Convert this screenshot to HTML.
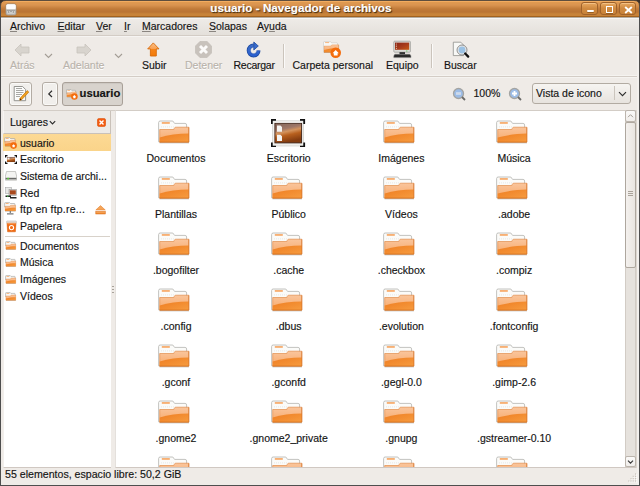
<!DOCTYPE html>
<html><head><meta charset="utf-8">
<style>
*{margin:0;padding:0;box-sizing:border-box}
html,body{width:640px;height:486px;overflow:hidden;background:#EFEBE7}
body{position:relative;font-family:"Liberation Sans",sans-serif;font-size:10.5px;color:#141414}
.t{-webkit-text-stroke:0.15px currentColor}
.a{position:absolute}
.t{position:absolute;white-space:nowrap;line-height:12px;font-size:10.5px}
.dis{color:#b9b3ab;text-shadow:0 1px 0 #fff}
.u{text-decoration:underline;text-decoration-thickness:1px;text-underline-offset:1px;text-decoration-color:#8a8580}
</style></head><body>
<svg width="0" height="0" style="position:absolute">
<defs>
<linearGradient id="fg" x1="0" y1="0" x2="0" y2="1">
<stop offset="0" stop-color="#FAC59C"/><stop offset="1" stop-color="#F7A96A"/>
</linearGradient>
<linearGradient id="fg2" x1="0" y1="0" x2="1" y2="1">
<stop offset="0" stop-color="#EF7E22"/><stop offset="1" stop-color="#F69C40"/>
</linearGradient>
<symbol id="folder" viewBox="0 0 36 28">
<path d="M2.6,4.6 Q2.6,3 4.2,3 L16.8,3 L18.6,5.4 L29,5.4 Q30.6,5.4 30.6,7 L30.6,13 L4,23.8 L2.6,23.8 Z" fill="#fbfbf9" stroke="#b4b4b0" stroke-width="0.8"/>
<rect x="5.8" y="4.1" width="8" height="1.7" fill="#F7A866"/>
<path d="M5,8.9 L19,8.9" stroke="#dcdcd8" stroke-width="0.6" stroke-dasharray="1 1"/>
<path d="M3.7,11.5 L17.8,11.5 C18.3,9.6 19,9.2 20.2,9.2 L32.8,9.2 L32.8,24.2 L3.7,24.2 Z" fill="url(#fg)" stroke="#de8038" stroke-width="0.6"/>
<path d="M3.7,19.6 C12,17 22,15.8 32.8,15.6 L32.8,24.2 L3.7,24.2 Z" fill="url(#fg2)"/>
<path d="M3.7,24 L32.8,24 L32.8,9.4" fill="none" stroke="#d06818" stroke-width="0.7" opacity="0.8"/>
<rect x="3.5" y="24.4" width="29.5" height="1.2" fill="#000" opacity="0.14"/>
</symbol>
<linearGradient id="dg" x1="0" y1="0" x2="0.3" y2="1">
<stop offset="0" stop-color="#7e6258"/><stop offset="0.35" stop-color="#a07868"/><stop offset="0.5" stop-color="#d4945e"/><stop offset="0.68" stop-color="#b8601e"/><stop offset="1" stop-color="#843c10"/>
</linearGradient>
<symbol id="desk" viewBox="0 0 35 28">
<rect x="1.3" y="1.8" width="31.4" height="25.2" fill="#f0f0ee" stroke="#c8c8c4" stroke-width="0.6"/>
<rect x="3.9" y="4.4" width="26.7" height="19.5" fill="url(#dg)" stroke="#3e2418" stroke-width="0.9"/>
<path d="M4.5,5 L30,5" stroke="#a08070" stroke-width="0.6" opacity="0.6"/>
<path d="M6,6.4 L9.5,6.4 L11,7.9 L11,12.8 L6,12.8 Z M6,15.7 L9.5,15.7 L11,17.2 L11,22 L6,22 Z" fill="#f4f4f2"/>
<path d="M0.8,5 L0.8,0.8 L5,0.8 M29,0.8 L33.2,0.8 L33.2,5 M0.8,23.6 L0.8,27.6 L5,27.6 M29,27.6 L33.2,27.6 L33.2,23.6" fill="none" stroke="#111" stroke-width="1.8"/>
</symbol>
<symbol id="mfolder" viewBox="0 0 12.5 10">
<path d="M0.6,1.3 Q0.6,0.6 1.3,0.6 L5.6,0.6 L6.4,1.5 L10.3,1.5 Q10.9,1.5 10.9,2.1 L10.9,5 L0.6,5 Z" fill="#f7f7f5" stroke="#9c9c98" stroke-width="0.6"/>
<rect x="1.6" y="1.2" width="3" height="0.8" fill="#f7a866"/>
<path d="M1,4.3 L5.9,4.3 Q6.3,3.3 7,3.3 L11.6,3.3 L11.6,8.9 L1,8.9 Z" fill="url(#fg)" stroke="#d98440" stroke-width="0.4"/>
<path d="M1,7.1 C4,6.1 8,5.7 11.6,5.7 L11.6,8.9 L1,8.9 Z" fill="url(#fg2)"/>
<rect x="1" y="8.9" width="10.6" height="0.8" fill="#000" opacity="0.15"/>
</symbol>
</defs>
</svg>

<!-- window frame -->
<div class="a" style="left:0;top:0;width:640px;height:486px;border:1px solid #4a3e33;border-top:none"></div>

<!-- title bar -->
<div class="a" style="left:0;top:0;width:640px;height:17px;background:linear-gradient(#5e4e3e 0,#5e4e3e 1px,#F2AC60 1px,#F2AC60 2px,#E09A50 2px,#DA9450 5px,#C07A38 9px,#BA7434 12px,#C8843A 14px,#C88238 16px,#A2621E 16px,#A2621E 17px);border-radius:4px 4px 0 0"></div>
<svg class="a" style="left:5px;top:3px" width="12" height="13" viewBox="0 0 12 13"><rect x="0.8" y="0.8" width="10.4" height="11.4" rx="2" fill="#e9e9e7" stroke="#9a7a5a" stroke-width="0.8" opacity="0.95"/><rect x="1.3" y="1.3" width="9.4" height="5" rx="1.5" fill="#fdfdfc"/><rect x="1.3" y="6.5" width="9.4" height="5.2" fill="#a5a5a3"/><path d="M2.5,8 L2.5,10.5 L9.5,10.5 L9.5,8 M4.5,8 L4.5,9.5 L7.5,9.5 L7.5,8" fill="none" stroke="#d8d8d6" stroke-width="0.8"/></svg>
<div class="t" style="left:210.3px;top:1.2px;font-weight:bold;font-size:11.7px;line-height:14px;color:#fff;text-shadow:1px 1px 1px #3a2a10">usuario - Navegador de archivos</div>
<!-- window buttons -->
<div class="a" style="left:581px;top:2px;width:17px;height:13px;border:1px solid #a0622a;border-radius:3px;background:linear-gradient(#e8a860,#d08a40 50%,#c88238);box-shadow:inset 0 1px 0 rgba(255,220,170,.5)"><div class="a" style="left:4.5px;top:6.5px;width:7px;height:2.6px;background:#fff;border-radius:1px;box-shadow:0 1px 0 rgba(80,40,0,.4)"></div></div>
<div class="a" style="left:600px;top:2px;width:17px;height:13px;border:1px solid #a0622a;border-radius:3px;background:linear-gradient(#e8a860,#d08a40 50%,#c88238);box-shadow:inset 0 1px 0 rgba(255,220,170,.5)"><div class="a" style="left:4.5px;top:2.5px;width:7px;height:7px;border:1.6px solid #fff;box-shadow:0 1px 0 rgba(80,40,0,.4)"></div></div>
<div class="a" style="left:619px;top:2px;width:17px;height:13px;border:1px solid #a0622a;border-radius:3px;background:linear-gradient(#e8a860,#d08a40 50%,#c88238);box-shadow:inset 0 1px 0 rgba(255,220,170,.5)"><svg class="a" style="left:4px;top:2.5px" width="9" height="8"><path d="M1.2,1 L7.8,7 M7.8,1 L1.2,7" stroke="#fff" stroke-width="1.9"/></svg></div>
<div class="a" style="left:639px;top:4px;width:1px;height:482px;background:#4e4e4e"></div>
<div class="a" style="left:0;top:4px;width:1px;height:482px;background:#4e4e4e"></div>
<svg class="a" style="left:0;top:0" width="6" height="6"><path d="M0,0 L6,0 L6,0.5 Q0.5,0.5 0.5,6 L0,6 Z" fill="#3a3028"/><path d="M0.5,6 Q0.5,0.5 6,0.5" fill="none" stroke="#5a4a3a" stroke-width="1"/></svg>
<svg class="a" style="left:634px;top:0" width="6" height="6"><path d="M6,0 L0,0 L0,0.5 Q5.5,0.5 5.5,6 L6,6 Z" fill="#3a3028"/><path d="M5.5,6 Q5.5,0.5 0,0.5" fill="none" stroke="#5a4a3a" stroke-width="1"/></svg>
<div class="a" style="left:0;top:485px;width:640px;height:1px;background:#4e4e4e"></div>
<!-- menubar -->
<div class="a" style="left:1px;top:17px;width:638px;height:19px;background:linear-gradient(#b4aca2 0,#b4aca2 1px,#f8f6f4 1px,#f8f6f4 2px,#eeebe7 2px,#e4e0db);border-bottom:1px solid #d3ccc5;box-shadow:0 1px 0 #f6f4f2"></div>
<div class="t" style="left:10px;top:19.9px"><span class="u">A</span>rchivo</div>
<div class="t" style="left:57.5px;top:19.9px"><span class="u">E</span>ditar</div>
<div class="t" style="left:96px;top:19.9px"><span class="u">V</span>er</div>
<div class="t" style="left:124px;top:19.9px"><span class="u">I</span>r</div>
<div class="t" style="left:142px;top:19.9px"><span class="u">M</span>arcadores</div>
<div class="t" style="left:209px;top:19.9px"><span class="u">S</span>olapas</div>
<div class="t" style="left:257px;top:19.9px">Ay<span class="u">u</span>da</div>

<!-- toolbar -->
<div class="a" style="left:1px;top:75px;width:638px;height:3px;background:linear-gradient(#f5f3f0 0,#f5f3f0 1px,#d3ccc5 1px,#d3ccc5 2px,#f5f3f0 2px)"></div>
<div class="t dis" style="left:10px;top:58.8px">Atrás</div>
<div class="t dis" style="left:63px;top:58.8px">Adelante</div>
<div class="t" style="left:142px;top:58.8px">Subir</div>
<div class="t dis" style="left:185px;top:58.8px">Detener</div>
<div class="t" style="left:233.5px;top:58.8px;letter-spacing:-0.25px">Recargar</div>
<div class="t" style="left:292.5px;top:58.8px">Carpeta personal</div>
<div class="t" style="left:386px;top:58.8px">Equipo</div>
<div class="t" style="left:444px;top:58.8px">Buscar</div>
<div class="a" style="left:282.5px;top:44px;width:1px;height:24px;background:#cbc4bc;box-shadow:1px 0 0 #fbfaf9"></div>
<div class="a" style="left:431px;top:44px;width:1px;height:24px;background:#cbc4bc;box-shadow:1px 0 0 #fbfaf9"></div>
<!-- back / forward arrows -->
<svg class="a" style="left:14px;top:43px" width="16" height="14"><path d="M1,7 L7,1 L7,4 L15,4 L15,10 L7,10 L7,13 Z" fill="#d8d4ce" stroke="#c8c3bc" stroke-width="0.8"/></svg>
<svg class="a" style="left:43.6px;top:53px" width="9" height="6"><path d="M1,1 L4.5,4.5 L8,1" fill="none" stroke="#a39d95" stroke-width="1.1"/></svg>
<svg class="a" style="left:76px;top:43px" width="16" height="14"><path d="M15,7 L9,1 L9,4 L1,4 L1,10 L9,10 L9,13 Z" fill="#d8d4ce" stroke="#c8c3bc" stroke-width="0.8"/></svg>
<svg class="a" style="left:114px;top:53px" width="9" height="6"><path d="M1,1 L4.5,4.5 L8,1" fill="none" stroke="#a39d95" stroke-width="1.1"/></svg>
<!-- up arrow -->
<svg class="a" style="left:146px;top:42px" width="15" height="15"><defs><linearGradient id="ug" x1="0" y1="0" x2="0" y2="1"><stop offset="0" stop-color="#fcc088"/><stop offset="0.45" stop-color="#f9a050"/><stop offset="0.5" stop-color="#f68418"/><stop offset="1" stop-color="#f27a08"/></linearGradient></defs><path d="M7.3,0.9 L13,6.9 L10.3,6.9 L10.3,14 L4.4,14 L4.4,6.9 L1.7,6.9 Z" fill="url(#ug)" stroke="#d86a08" stroke-width="0.9" stroke-linejoin="round"/></svg>
<!-- stop -->
<svg class="a" style="left:195px;top:41px" width="17" height="17"><path d="M4.9,0.5 L12.1,0.5 L16.5,4.9 L16.5,12.1 L12.1,16.5 L4.9,16.5 L0.5,12.1 L0.5,4.9 Z" fill="#c8c2bc" stroke="#c0bab3" stroke-width="0.6"/><path d="M5,5 L12,12 M12,5 L5,12" stroke="#fbfaf9" stroke-width="2.9"/></svg>
<!-- reload -->
<svg class="a" style="left:244px;top:40px" width="18" height="19" viewBox="0 0 18 19"><defs><linearGradient id="rg" x1="0" y1="0" x2="0" y2="1"><stop offset="0" stop-color="#3c6cc8"/><stop offset="1" stop-color="#2a60d0"/></linearGradient></defs><path d="M14.5,10.5 A4.9,4.9 0 1 1 9.6,5.6" fill="none" stroke="#1d4aa0" stroke-width="4"/><path d="M14.5,10.5 A4.9,4.9 0 1 1 9.6,5.6" fill="none" stroke="url(#rg)" stroke-width="2.5"/><path d="M12.8,10.5 A3.2,3.2 0 1 1 9.6,7.3" fill="none" stroke="#7aa0e8" stroke-width="0.7" opacity="0.7"/><path d="M9.8,2 L14.3,6 L9.8,10 Z" fill="#3a6ccc" stroke="#1d4aa0" stroke-width="0.8" stroke-linejoin="round"/></svg>
<!-- home folder -->
<svg class="a" style="left:320px;top:38px" width="26" height="22" viewBox="0 0 26 22"><use href="#folder" x="2.2" y="2.2" width="18" height="14"/><circle cx="15.7" cy="14.8" r="5.3" fill="#f46c0c"/><path d="M12.6,15.2 L15.7,12 L18.8,15.2 L17.6,15.2 L17.6,17.6 L13.8,17.6 L13.8,15.2 Z" fill="#fff"/></svg>
<!-- computer -->
<svg class="a" style="left:388px;top:38px" width="30" height="22" viewBox="0 0 30 22"><rect x="5.8" y="3.2" width="16.6" height="11" rx="0.8" fill="#dcdcd8" stroke="#9a9a96" stroke-width="0.7"/><defs><linearGradient id="scr" x1="0" y1="0" x2="1" y2="1"><stop offset="0" stop-color="#882418"/><stop offset="0.55" stop-color="#a83c1c"/><stop offset="1" stop-color="#c85a14"/></linearGradient></defs><rect x="7" y="4.6" width="14.2" height="7.2" fill="url(#scr)"/><rect x="18" y="12.6" width="1.4" height="0.8" fill="#5c5"/><circle cx="8.4" cy="6" r="0.6" fill="#e8c0a0"/><circle cx="8.4" cy="8.2" r="0.6" fill="#e8c0a0"/><circle cx="8.4" cy="10.3" r="0.6" fill="#e8c0a0"/><rect x="11.5" y="14.2" width="5.5" height="2" fill="#222"/><path d="M7,16.2 L21.5,16.2 Q23,16.6 23,18.5 L23,19.6 L5.8,19.6 L5.8,18.5 Q5.8,16.6 7,16.2 Z" fill="#2a2a2a" stroke="#888" stroke-width="0.5"/></svg>
<!-- search -->
<svg class="a" style="left:446px;top:38px" width="30" height="22" viewBox="0 0 30 22"><path d="M7.3,4.2 L14.8,4.2 L17.5,7 L17.5,17.6 L7.3,17.6 Z" fill="#f8f8f6" stroke="#8e8e8a" stroke-width="0.8"/><circle cx="16" cy="12" r="4.2" fill="#9cc2e4" stroke="#e8e8e8" stroke-width="1.5"/><circle cx="16" cy="12" r="5" fill="none" stroke="#6a6a6a" stroke-width="0.7"/><path d="M19.2,15.5 L22.2,18.6" stroke="#111" stroke-width="2.3" stroke-linecap="round"/></svg>
<!-- location bar -->
<div class="a" style="left:8.5px;top:82px;width:23.5px;height:23.5px;border:1px solid #b3aca4;border-radius:3px;background:#f1efec;box-shadow:inset 0 0 0 1px #faf9f7"></div>
<svg class="a" style="left:13px;top:85px" width="17" height="17" viewBox="0 0 17 17"><path d="M1.2,1.5 L9.6,1.5 L12.6,4.5 L12.6,15.7 L1.2,15.7 Z" fill="#fcfcfb" stroke="#8a8a86" stroke-width="0.9"/><path d="M3,3.5 L9,3.5 M3,5.5 L10.5,5.5 M3,7.5 L10.5,7.5 M3,9.5 L9,9.5 M3,11.5 L7,11.5" stroke="#a8a8a4" stroke-width="1"/><path d="M7,13.3 L14.2,5.6 L15.8,7.1 L8.6,14.8 L6.8,15.2 Z" fill="#f0a020" stroke="#b86a00" stroke-width="0.6"/><path d="M6.8,15.2 L7,13.3 L8.6,14.8 Z" fill="#4a2a10"/></svg>
<div class="a" style="left:42px;top:82px;width:16px;height:23.5px;border:1px solid #b3aca4;border-radius:3px;background:#f1efec;box-shadow:inset 0 0 0 1px #faf9f7"></div>
<svg class="a" style="left:47px;top:90px" width="7" height="8"><path d="M5,0.8 L1.8,3.9 L5,7" fill="none" stroke="#2a2a2a" stroke-width="1.2"/></svg>
<div class="a" style="left:62px;top:82px;width:61px;height:23.5px;border:1px solid #a8a098;border-radius:3px;background:#d8d3cd;box-shadow:inset 0 1px 1px rgba(0,0,0,.06)"></div>
<svg class="a" style="left:64px;top:86px" width="16" height="16" viewBox="0 0 16 16"><use href="#mfolder" x="2" y="3" width="11" height="8.8"/><circle cx="10.4" cy="10.5" r="3.3" fill="#f46c0c"/><path d="M8.6,10.8 L10.4,9 L12.2,10.8 L11.5,10.8 L11.5,12.3 L9.3,12.3 L9.3,10.8 Z" fill="#fff"/></svg>
<div class="t" style="left:79.5px;top:86.3px;font-weight:bold;font-size:11.3px;line-height:14px">usuario</div>

<svg class="a" style="left:452px;top:87px" width="14" height="14"><circle cx="6.5" cy="6.5" r="5" fill="#9cbce6" stroke="#a4a4a2" stroke-width="1.3"/><path d="M4,6.5 L9,6.5" stroke="#fff" stroke-width="1.8"/><path d="M4,6.5 L9,6.5" stroke="#4a6aa0" stroke-width="0.5" opacity="0.5"/><path d="M10,10 L13,13" stroke="#6a6a68" stroke-width="1.8"/></svg>
<div class="t" style="left:473.5px;top:87px">100%</div>
<svg class="a" style="left:508px;top:87px" width="14" height="14"><circle cx="6.5" cy="6.5" r="5" fill="#9cbce6" stroke="#a4a4a2" stroke-width="1.3"/><path d="M4,6.5 L9,6.5 M6.5,4 L6.5,9" stroke="#fff" stroke-width="1.8"/><path d="M10,10 L13,13" stroke="#6a6a68" stroke-width="1.8"/></svg>
<div class="a" style="left:531.5px;top:83px;width:99.5px;height:20.8px;border:1px solid #b2aba2;border-radius:3px;background:linear-gradient(#f6f4f1,#e7e3de)"></div>
<div class="a" style="left:614px;top:86px;width:1px;height:14px;background:#cbc5bd"></div>
<svg class="a" style="left:617.5px;top:90.5px" width="10" height="7"><path d="M1,1.2 L4.5,4.7 L8,1.2" fill="none" stroke="#2e2e2e" stroke-width="1.15"/></svg>
<div class="t" style="left:536px;top:87px">Vista de icono</div>

<!-- pane area -->
<div class="a" style="left:3px;top:110px;width:108px;height:358px;border-top:1px solid #d3cdc6;border-bottom:1px solid #d0c8c2;border-left:1px solid #f2efec;background:#fff"></div>
<div class="a" style="left:3px;top:111px;width:108px;height:23px;background:#edeae6;border-right:1px solid #c9c1b9;border-bottom:1px solid #c9c1b9;border-left:1px solid #f6f4f2"></div>
<div class="t" style="left:10px;top:116px">Lugares</div>
<svg class="a" style="left:49px;top:120px" width="7" height="6"><path d="M0.8,1.2 L3.5,4 L6.2,1.2" fill="none" stroke="#2a2a2a" stroke-width="1.1"/></svg>
<svg class="a" style="left:97px;top:118px" width="9" height="9"><rect x="0.4" y="0.4" width="8.2" height="8.2" rx="1.8" fill="#f25c12" stroke="#dc4c00" stroke-width="0.6"/><path d="M2.5,2.5 L6.5,6.5 M6.5,2.5 L2.5,6.5" stroke="#fff" stroke-width="1.4"/></svg>

<div class="a" style="left:3px;top:134px;width:108px;height:17px;background:linear-gradient(#fcd994,#fad48a)"></div>
<div class="t" style="left:20px;top:136.5px">usuario</div>
<div class="t" style="left:20px;top:153.2px">Escritorio</div>
<div class="t" style="left:20px;top:170px">Sistema de archi...</div>
<div class="t" style="left:20px;top:186.7px">Red</div>
<div class="t" style="left:20px;top:203.4px;letter-spacing:0.2px">ftp en ftp.re...</div>
<div class="t" style="left:20px;top:220px">Papelera</div>
<div class="a" style="left:5px;top:236px;width:105px;height:1px;background:#d8d2ca"></div>
<div class="t" style="left:20px;top:239.5px">Documentos</div>
<div class="t" style="left:20px;top:256.3px">Música</div>
<div class="t" style="left:20px;top:273px">Imágenes</div>
<div class="t" style="left:20px;top:290px">Vídeos</div>
<!-- sidebar icons -->
<svg class="a" style="left:4.3px;top:136.5px" width="16" height="13" viewBox="0 0 16 13"><use href="#mfolder" x="0" y="0" width="12.5" height="10"/><circle cx="9.6" cy="8.6" r="3.3" fill="#f46c0c"/><path d="M7.9,8.9 L9.6,7.2 L11.3,8.9 L10.7,8.9 L10.7,10.3 L8.5,10.3 L8.5,8.9 Z" fill="#fff"/></svg>
<svg class="a" style="left:5px;top:155px" width="12" height="9" viewBox="0 0 12 9"><rect x="1.2" y="1.2" width="9.6" height="6.6" fill="#fafafa"/><rect x="2" y="2" width="8" height="5" fill="url(#dg)"/><path d="M0.6,2.5 L0.6,0.6 L2.5,0.6 M9.5,0.6 L11.4,0.6 L11.4,2.5 M0.6,6.5 L0.6,8.4 L2.5,8.4 M9.5,8.4 L11.4,8.4 L11.4,6.5" fill="none" stroke="#111" stroke-width="1.2"/><rect x="2.5" y="2.6" width="2" height="1.8" fill="#eee"/></svg>
<svg class="a" style="left:5px;top:171px" width="12" height="10" viewBox="0 0 12 10"><path d="M1.5,0.5 L10.5,0.5 L11.6,5 L11.6,9.2 L0.4,9.2 L0.4,5 Z" fill="#f4f4f2" stroke="#a8a8a4" stroke-width="0.6"/><rect x="0.6" y="6.8" width="10.8" height="1.6" fill="#6a6a68"/><rect x="2.3" y="6.8" width="1.6" height="1.6" fill="#5fd83a"/></svg>
<svg class="a" style="left:5px;top:187px" width="12" height="12" viewBox="0 0 12 12"><rect x="0.5" y="0.5" width="6" height="6" fill="#e8e8e6" stroke="#999" stroke-width="0.5"/><rect x="4" y="2.5" width="7.5" height="6" fill="#ddd" stroke="#888" stroke-width="0.5"/><rect x="4.8" y="3.3" width="6" height="4.2" fill="#a8481c"/><path d="M0.5,9.2 L6,9.2 M5,10.8 L11.5,10.8" stroke="#222" stroke-width="1.4"/><rect x="2" y="8.5" width="1.4" height="1.2" fill="#5c5"/></svg>
<svg class="a" style="left:4.3px;top:202px" width="13" height="13" viewBox="0 0 13 13"><use href="#mfolder" x="0" y="0" width="12.5" height="10"/><path d="M6.3,9 L6.3,11 M3,11.8 L9.5,11.8" stroke="#777" stroke-width="1.2"/></svg>
<svg class="a" style="left:6px;top:220px" width="11" height="13" viewBox="0 0 11 13"><rect x="0.6" y="1" width="9.8" height="2.4" rx="0.6" fill="#e8e4e0" stroke="#b0aaa4" stroke-width="0.5"/><path d="M1,3.2 L10,3.2 L9.4,11.8 L1.6,11.8 Z" fill="#f26a12" stroke="#d05800" stroke-width="0.5"/><rect x="1.2" y="3.2" width="8.6" height="1" fill="#f8a060"/><circle cx="5.5" cy="7.6" r="2.1" fill="none" stroke="#fff" stroke-width="1.1"/></svg>
<svg class="a" style="left:95px;top:205px" width="11" height="10" viewBox="0 0 11 10"><path d="M5.5,0.6 L10.3,5 L0.8,5 Z" fill="#f5a55a" stroke="#e07a28" stroke-width="0.5"/><rect x="0.8" y="6.4" width="9.5" height="2.6" fill="#f08a30" stroke="#d86a18" stroke-width="0.5"/><path d="M1.3,7.2 L9.8,7.2" stroke="#fbc080" stroke-width="0.6"/></svg>
<svg class="a" style="left:4.6px;top:240.8px" width="13" height="10"><use href="#mfolder" x="0" y="0" width="11.6" height="9.3"/></svg>
<svg class="a" style="left:4.6px;top:257.8px" width="13" height="10"><use href="#mfolder" x="0" y="0" width="11.6" height="9.3"/></svg>
<svg class="a" style="left:4.6px;top:274.8px" width="13" height="10"><use href="#mfolder" x="0" y="0" width="11.6" height="9.3"/></svg>
<svg class="a" style="left:4.6px;top:291.8px" width="13" height="10"><use href="#mfolder" x="0" y="0" width="11.6" height="9.3"/></svg>
<!-- pane handle -->
<div class="a" style="left:111px;top:110px;width:4px;height:1px;background:#d3cdc6"></div>
<div class="a" style="left:112px;top:286px;width:2px;height:1px;background:#a8a29a"></div>
<div class="a" style="left:112px;top:289px;width:2px;height:1px;background:#a8a29a"></div>
<div class="a" style="left:112px;top:292px;width:2px;height:1px;background:#a8a29a"></div>

<!-- content frame -->
<div class="a" style="left:115px;top:110px;width:521px;height:358px;border-top:1px solid #d3cdc6;border-bottom:1px solid #d0c8c2;border-left:1px solid #e4e0dc;background:#fff"></div>
<!-- scrollbar -->
<div class="a" style="left:636px;top:110px;width:1px;height:358px;background:#ddd7d0"></div>
<div class="a" style="left:637px;top:36px;width:2px;height:449px;background:#f3f0ed"></div>
<div class="a" style="left:625px;top:110px;width:11px;height:357px;background:#e6e2dd;border-left:1px solid #d2ccc5;border-right:1px solid #d2ccc5"></div>
<div class="a" style="left:625px;top:110px;width:11px;height:12px;border:1px solid #bcb5ad;border-radius:2px;background:linear-gradient(#fbfaf9,#f1eeeb)"></div>
<svg class="a" style="left:627px;top:113px" width="7" height="6"><path d="M1,4.2 L3.5,1.7 L6,4.2" fill="none" stroke="#9a938a" stroke-width="0.9"/></svg>
<div class="a" style="left:625px;top:122px;width:11px;height:146px;border:1px solid #aea79e;border-radius:2px;background:linear-gradient(90deg,#f4f1ee,#e9e5e0)"></div>
<div class="a" style="left:628px;top:191px;width:5px;height:1px;background:#aaa39a;box-shadow:0 2px 0 #aaa39a,0 4px 0 #aaa39a"></div>
<div class="a" style="left:625px;top:456px;width:11px;height:11px;border:1px solid #bcb5ad;border-radius:2px;background:linear-gradient(#fbfaf9,#f1eeeb)"></div>
<svg class="a" style="left:627px;top:459px" width="7" height="6"><path d="M1,1.6 L3.5,4.1 L6,1.6" fill="none" stroke="#3a3a3a" stroke-width="1.2"/></svg>

<!-- grid -->
<div class="a" style="left:116px;top:111px;width:509px;height:356px;overflow:hidden">
<svg class="a" style="left:40.0px;top:7.3px" width="36" height="28"><use href="#folder"/></svg>
<div class="t" style="left:4.0px;top:40.9px;width:112px;text-align:center">Documentos</div>
<svg class="a" style="left:155px;top:8px" width="35" height="28"><use href="#desk"/></svg>
<div class="t" style="left:116.7px;top:40.9px;width:112px;text-align:center">Escritorio</div>
<svg class="a" style="left:265.4px;top:7.3px" width="36" height="28"><use href="#folder"/></svg>
<div class="t" style="left:229.4px;top:40.9px;width:112px;text-align:center">Imágenes</div>
<svg class="a" style="left:378.1px;top:7.3px" width="36" height="28"><use href="#folder"/></svg>
<div class="t" style="left:342.1px;top:40.9px;width:112px;text-align:center">Música</div>
<svg class="a" style="left:40.0px;top:63.3px" width="36" height="28"><use href="#folder"/></svg>
<div class="t" style="left:4.0px;top:96.9px;width:112px;text-align:center">Plantillas</div>
<svg class="a" style="left:152.7px;top:63.3px" width="36" height="28"><use href="#folder"/></svg>
<div class="t" style="left:116.7px;top:96.9px;width:112px;text-align:center">Público</div>
<svg class="a" style="left:265.4px;top:63.3px" width="36" height="28"><use href="#folder"/></svg>
<div class="t" style="left:229.4px;top:96.9px;width:112px;text-align:center">Vídeos</div>
<svg class="a" style="left:378.1px;top:63.3px" width="36" height="28"><use href="#folder"/></svg>
<div class="t" style="left:342.1px;top:96.9px;width:112px;text-align:center">.adobe</div>
<svg class="a" style="left:40.0px;top:119.3px" width="36" height="28"><use href="#folder"/></svg>
<div class="t" style="left:4.0px;top:152.9px;width:112px;text-align:center">.bogofilter</div>
<svg class="a" style="left:152.7px;top:119.3px" width="36" height="28"><use href="#folder"/></svg>
<div class="t" style="left:116.7px;top:152.9px;width:112px;text-align:center">.cache</div>
<svg class="a" style="left:265.4px;top:119.3px" width="36" height="28"><use href="#folder"/></svg>
<div class="t" style="left:229.4px;top:152.9px;width:112px;text-align:center">.checkbox</div>
<svg class="a" style="left:378.1px;top:119.3px" width="36" height="28"><use href="#folder"/></svg>
<div class="t" style="left:342.1px;top:152.9px;width:112px;text-align:center">.compiz</div>
<svg class="a" style="left:40.0px;top:175.3px" width="36" height="28"><use href="#folder"/></svg>
<div class="t" style="left:4.0px;top:208.9px;width:112px;text-align:center">.config</div>
<svg class="a" style="left:152.7px;top:175.3px" width="36" height="28"><use href="#folder"/></svg>
<div class="t" style="left:116.7px;top:208.9px;width:112px;text-align:center">.dbus</div>
<svg class="a" style="left:265.4px;top:175.3px" width="36" height="28"><use href="#folder"/></svg>
<div class="t" style="left:229.4px;top:208.9px;width:112px;text-align:center">.evolution</div>
<svg class="a" style="left:378.1px;top:175.3px" width="36" height="28"><use href="#folder"/></svg>
<div class="t" style="left:342.1px;top:208.9px;width:112px;text-align:center">.fontconfig</div>
<svg class="a" style="left:40.0px;top:231.3px" width="36" height="28"><use href="#folder"/></svg>
<div class="t" style="left:4.0px;top:264.9px;width:112px;text-align:center">.gconf</div>
<svg class="a" style="left:152.7px;top:231.3px" width="36" height="28"><use href="#folder"/></svg>
<div class="t" style="left:116.7px;top:264.9px;width:112px;text-align:center">.gconfd</div>
<svg class="a" style="left:265.4px;top:231.3px" width="36" height="28"><use href="#folder"/></svg>
<div class="t" style="left:229.4px;top:264.9px;width:112px;text-align:center">.gegl-0.0</div>
<svg class="a" style="left:378.1px;top:231.3px" width="36" height="28"><use href="#folder"/></svg>
<div class="t" style="left:342.1px;top:264.9px;width:112px;text-align:center">.gimp-2.6</div>
<svg class="a" style="left:40.0px;top:287.3px" width="36" height="28"><use href="#folder"/></svg>
<div class="t" style="left:4.0px;top:320.9px;width:112px;text-align:center">.gnome2</div>
<svg class="a" style="left:152.7px;top:287.3px" width="36" height="28"><use href="#folder"/></svg>
<div class="t" style="left:116.7px;top:320.9px;width:112px;text-align:center">.gnome2_private</div>
<svg class="a" style="left:265.4px;top:287.3px" width="36" height="28"><use href="#folder"/></svg>
<div class="t" style="left:229.4px;top:320.9px;width:112px;text-align:center">.gnupg</div>
<svg class="a" style="left:378.1px;top:287.3px" width="36" height="28"><use href="#folder"/></svg>
<div class="t" style="left:342.1px;top:320.9px;width:112px;text-align:center">.gstreamer-0.10</div>
<svg class="a" style="left:40.0px;top:343.3px" width="36" height="28"><use href="#folder"/></svg>
<svg class="a" style="left:152.7px;top:343.3px" width="36" height="28"><use href="#folder"/></svg>
<svg class="a" style="left:265.4px;top:343.3px" width="36" height="28"><use href="#folder"/></svg>
<svg class="a" style="left:378.1px;top:343.3px" width="36" height="28"><use href="#folder"/></svg>
</div>
<!-- /grid -->

<!-- statusbar -->
<div class="t" style="left:5px;top:468.4px;font-size:10.62px">55 elementos, espacio libre: 50,2 GiB</div>
<svg class="a" style="left:626px;top:472px" width="12" height="12"><rect x="9.0" y="1.5" width="1" height="1" fill="#bdb6ae"/><rect x="10.0" y="2.5" width="1" height="1" fill="#fff"/><rect x="6.7" y="3.8" width="1" height="1" fill="#bdb6ae"/><rect x="7.7" y="4.8" width="1" height="1" fill="#fff"/><rect x="9.0" y="3.8" width="1" height="1" fill="#bdb6ae"/><rect x="10.0" y="4.8" width="1" height="1" fill="#fff"/><rect x="4.5" y="6.2" width="1" height="1" fill="#bdb6ae"/><rect x="5.5" y="7.2" width="1" height="1" fill="#fff"/><rect x="6.7" y="6.2" width="1" height="1" fill="#bdb6ae"/><rect x="7.7" y="7.2" width="1" height="1" fill="#fff"/><rect x="9.0" y="6.2" width="1" height="1" fill="#bdb6ae"/><rect x="10.0" y="7.2" width="1" height="1" fill="#fff"/><rect x="2.3" y="8.5" width="1" height="1" fill="#bdb6ae"/><rect x="3.3" y="9.5" width="1" height="1" fill="#fff"/><rect x="4.5" y="8.5" width="1" height="1" fill="#bdb6ae"/><rect x="5.5" y="9.5" width="1" height="1" fill="#fff"/><rect x="6.7" y="8.5" width="1" height="1" fill="#bdb6ae"/><rect x="7.7" y="9.5" width="1" height="1" fill="#fff"/><rect x="9.0" y="8.5" width="1" height="1" fill="#bdb6ae"/><rect x="10.0" y="9.5" width="1" height="1" fill="#fff"/></svg>
</body></html>
